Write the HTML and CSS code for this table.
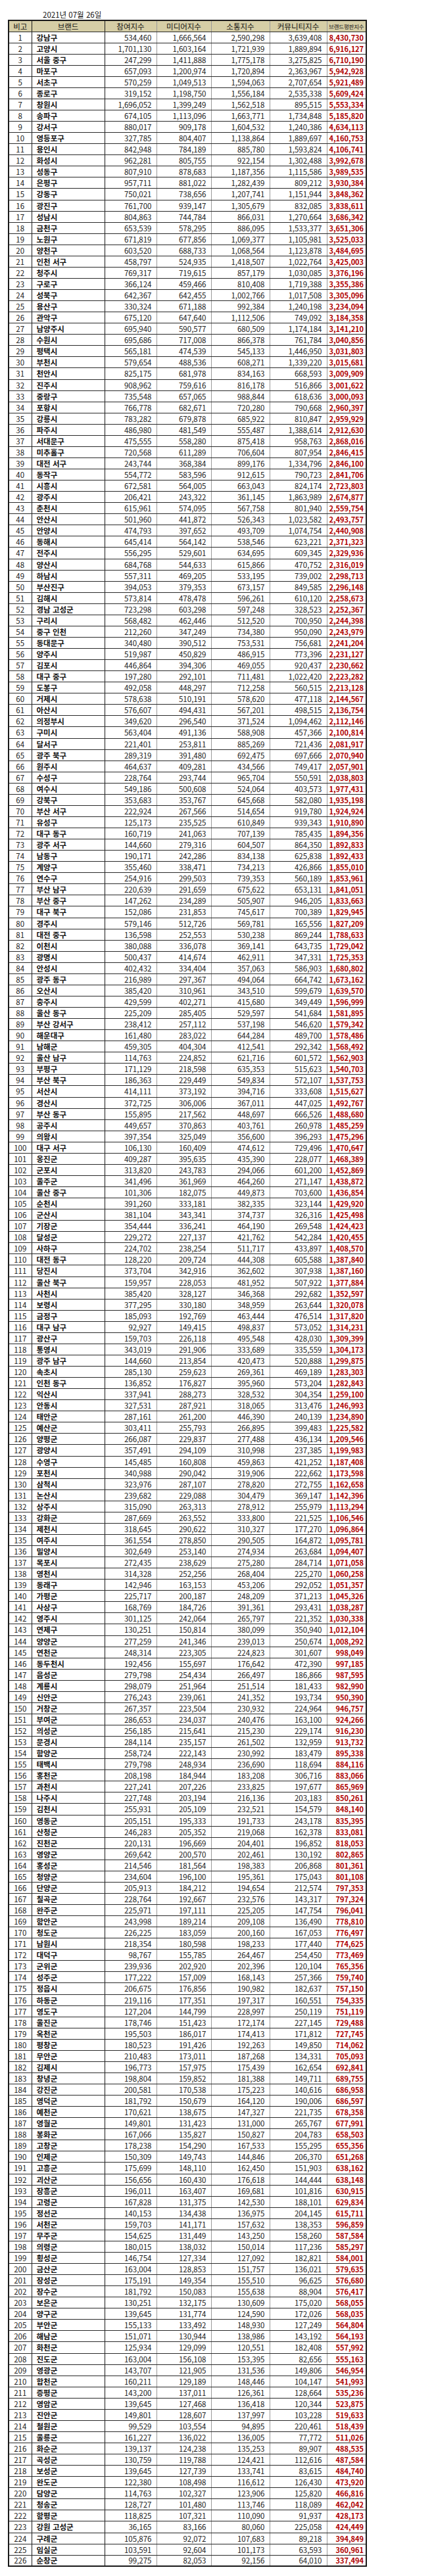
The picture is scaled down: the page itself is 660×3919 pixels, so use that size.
FILE: index.html
```html
<!DOCTYPE html>
<html lang="ko">
<head>
<meta charset="utf-8">
<title>브랜드평판지수</title>
<link rel="stylesheet" href="styles.css">
</head>
<body>
<div class="sheet">
  <div class="date">2021년 07월 26일</div>
  <table class="rank">
    <colgroup>
      <col class="c-no"><col class="c-name"><col class="c-a"><col class="c-b"><col class="c-c"><col class="c-d"><col class="c-t">
    </colgroup>
    <thead>
      <tr>
        <th>비고</th><th>브랜드</th><th>참여지수</th><th>미디어지수</th><th>소통지수</th><th>커뮤니티지수</th><th class="th-t">브랜드평판지수</th>
      </tr>
    </thead>
    <tbody id="rows"></tbody>
  </table>
</div>
<script src="data.js"></script>
</body>
</html>
```
FILE: styles.css
```css
html, body { margin: 0; padding: 0; background: #fff; }
body {
  font-family: "Noto Sans CJK KR", "Noto Sans", sans-serif;
  font-size: 11.5px;
  color: #111;
}
.sheet { padding: 14px 0 0 12px; }
.date {
  margin-left: 53px;
  height: 16px;
  line-height: 16px;
  font-size: 11.5px;
  color: #111;
}
table.rank {
  border-collapse: collapse;
  table-layout: fixed;
  width: 544px;
  border: 2px solid #1a1a1a;
}
.c-no { width: 35px; }
.c-name { width: 111px; }
.c-a { width: 79px; }
.c-b { width: 83px; }
.c-c { width: 89px; }
.c-d { width: 87px; }
.c-t { width: 60px; }
table.rank th,
table.rank td {
  box-sizing: border-box;
  height: 17.07px;
  padding: 0 7px;
  line-height: 14px;
  white-space: nowrap;
  border-top: 1px solid #2a2a2a;
  border-bottom: 1px solid #2a2a2a;
  border-left: 1px solid #9a9a9a;
  border-right: 1px solid #9a9a9a;
  vertical-align: middle;
}
table.rank th {
  background: #d6cea6;
  font-weight: normal;
  text-align: center;
  color: #111;
  padding: 0 2px;
}
table.rank th:nth-child(1), table.rank td:nth-child(1),
table.rank th:nth-child(2), table.rank td:nth-child(2),
table.rank th:nth-child(7), table.rank td:nth-child(7) {
  border-left-color: #1a1a1a;
  border-right-color: #1a1a1a;
}
table.rank th.th-t { font-size: 8.5px; padding: 0; letter-spacing: -0.2px; }
table.rank td.no { text-align: center; padding: 0; color: #222; }
table.rank td.name { text-align: left; font-weight: 600; color: #111; }
table.rank td.num { text-align: right; color: #222; }
table.rank td.tot { text-align: right; color: #b00000; font-weight: bold; padding: 0 3px; font-size: 11px; }
```
FILE: data.js
```js
(function () {
  var raw = [
    "강남구|534460|1666564|2590298|3639408",
    "고양시|1701130|1603164|1721939|1889894",
    "서울 중구|247299|1411888|1775178|3275825",
    "마포구|657093|1200974|1720894|2363967",
    "서초구|570259|1049513|1594063|2707654",
    "종로구|319152|1198750|1556184|2535338",
    "창원시|1696052|1399249|1562518|895515",
    "송파구|674105|1113096|1663771|1734848",
    "강서구|880017|909178|1604532|1240386",
    "영등포구|327785|804407|1138864|1889697",
    "용인시|842948|784189|885780|1593824",
    "화성시|962281|805755|922154|1302488",
    "성동구|807910|878683|1187356|1115586",
    "은평구|957711|881022|1282439|809212",
    "강동구|750021|738656|1207741|1151944",
    "광진구|761700|939147|1305679|832085",
    "성남시|804863|744784|866031|1270664",
    "금천구|653539|578295|886095|1533377",
    "노원구|671819|677856|1069377|1105981",
    "양천구|603520|688733|1068564|1123878",
    "인천 서구|458797|524935|1418507|1022764",
    "청주시|769317|719615|857179|1030085",
    "구로구|366124|459466|810408|1719388",
    "성북구|642367|642455|1002766|1017508",
    "용산구|330324|671188|992384|1240198",
    "관악구|675120|647640|1112506|749092",
    "남양주시|695940|590577|680509|1174184",
    "수원시|695686|717008|866378|761784",
    "평택시|565181|474539|545133|1446950",
    "부천시|579654|488536|608271|1339220",
    "천안시|825175|681978|834163|668593",
    "진주시|908962|759616|816178|516866",
    "중랑구|735548|657065|988844|618636",
    "포항시|766778|682671|720280|790668",
    "강릉시|783282|679878|685922|810847",
    "파주시|486980|481549|555487|1388614",
    "서대문구|475555|558280|875418|958763",
    "미추홀구|720568|611289|706604|807954",
    "대전 서구|243744|368384|899176|1334796",
    "동작구|554772|583596|912615|790723",
    "시흥시|672581|564005|663043|824174",
    "광주시|206421|243322|361145|1863989",
    "춘천시|615961|574095|567758|801940",
    "안산시|501960|441872|526343|1023582",
    "안양시|474793|397652|493709|1074754",
    "동해시|645414|564142|538546|623221",
    "전주시|556295|529601|634695|609345",
    "양산시|684768|544633|615866|470752",
    "하남시|557311|469205|533195|739002",
    "부산진구|394053|379353|673157|849585",
    "김해시|573814|478478|596261|610120",
    "경남 고성군|723298|603298|597248|328523",
    "구리시|568482|462446|512520|700950",
    "중구 인천|212260|347249|734380|950090",
    "동대문구|340480|390512|753531|756681",
    "양주시|519987|450829|486915|773396",
    "김포시|446864|394306|469055|920437",
    "대구 중구|197280|292101|711481|1022420",
    "도봉구|492058|448297|712258|560515",
    "거제시|578638|510191|578620|477118",
    "아산시|576607|494431|567201|498515",
    "의정부시|349620|296540|371524|1094462",
    "구미시|563404|491136|588908|457366",
    "달서구|221401|253811|885269|721436",
    "광주 북구|289319|391480|692475|697666",
    "원주시|464637|409281|434566|749417",
    "수성구|228764|293744|965704|550591",
    "여수시|549186|500608|524064|403573",
    "강북구|353683|353767|645668|582080",
    "부산 서구|222924|267566|514654|919780",
    "유성구|125173|235525|610849|939343",
    "대구 동구|160719|241063|707139|785435",
    "광주 서구|144660|279316|604507|864350",
    "남동구|190171|242286|834138|625838",
    "계양구|355460|338471|734213|426866",
    "연수구|254916|299503|739353|560189",
    "부산 남구|220639|291659|675622|653131",
    "부산 중구|147262|234289|505907|946205",
    "대구 북구|152086|231853|745617|700389",
    "경주시|579146|512726|569781|165556",
    "대전 중구|136598|252553|530238|869244",
    "이천시|380088|336078|369141|643735",
    "광명시|500437|414674|462911|347331",
    "안성시|402432|334404|357063|586903",
    "광주 동구|216989|297367|494064|664742",
    "오산시|385420|310961|343510|599679",
    "충주시|429599|402271|415680|349449",
    "울산 동구|225209|285405|529597|541684",
    "부산 강서구|238412|257112|537198|546620",
    "해운대구|161480|283022|644284|489700",
    "남해군|459305|404304|412541|292342",
    "울산 남구|114763|224852|621716|601572",
    "부평구|171129|218598|635353|515623",
    "부산 북구|186363|229449|549834|572107",
    "서산시|414111|373192|394716|333608",
    "경산시|372725|306006|367011|447025",
    "부산 동구|155895|217562|448697|666526",
    "공주시|449657|370863|403761|260978",
    "의왕시|397354|325049|356600|396293",
    "대구 서구|106130|160409|474612|729496",
    "옹진군|409287|395635|435390|228077",
    "군포시|313820|243783|294066|601200",
    "울주군|341496|361969|464260|271147",
    "울산 중구|101306|182075|449873|703600",
    "순천시|391260|333181|382335|323144",
    "군산시|381104|343341|374737|326316",
    "기장군|354444|336241|464190|269548",
    "달성군|229272|227137|421762|542284",
    "사하구|224702|238254|511717|433897",
    "대전 동구|128220|209724|444308|605588",
    "당진시|373704|342916|362602|307938",
    "울산 북구|159957|228053|481952|507922",
    "사천시|385420|328127|346368|292682",
    "보령시|377295|330180|348959|263644",
    "금정구|185093|192769|463444|476514",
    "대구 남구|92927|149415|498837|573052",
    "광산구|159703|226118|495548|428030",
    "통영시|343019|291906|333689|335559",
    "광주 남구|144660|213854|420473|520888",
    "속초시|285130|259623|269361|469189",
    "인천 동구|136852|176827|395960|573204",
    "익산시|337941|288273|328532|304354",
    "안동시|327531|287921|318065|313476",
    "태안군|287161|261200|446390|240139",
    "예산군|303411|255793|266895|399483",
    "양평군|266087|229837|277488|436134",
    "광양시|357491|294109|310998|237385",
    "수영구|145485|160808|459863|421252",
    "포천시|340988|290042|319906|222662",
    "삼척시|323976|287107|278820|272755",
    "논산시|239682|229088|304479|369147",
    "상주시|315090|263313|278912|255979",
    "강화군|287669|263552|333800|221525",
    "제천시|318645|290622|310327|177270",
    "여주시|361554|278850|290505|164872",
    "밀양시|302649|253140|274934|263684",
    "목포시|272435|238629|275280|284714",
    "영천시|314328|252256|268404|225270",
    "동래구|142946|163153|453206|292052",
    "가평군|225717|200187|248209|371213",
    "사상구|168769|184726|391361|293431",
    "영주시|301125|242064|265797|221352",
    "연제구|130251|150814|380099|350940",
    "양양군|277259|241346|239013|250674",
    "연천군|248314|223305|224823|301607",
    "동두천시|192456|155697|176642|472390",
    "음성군|279798|254434|266497|186866",
    "계룡시|298079|251964|251514|181433",
    "신안군|276243|239061|241352|193734",
    "거창군|267357|223504|230932|224964",
    "부여군|286653|234037|240476|163100",
    "의성군|256185|215641|215230|229174",
    "문경시|284114|235157|261502|132959",
    "함양군|258724|222143|230992|183479",
    "태백시|279798|248934|236690|118694",
    "홍천군|208198|184944|183208|306716",
    "과천시|227241|207226|233825|197677",
    "나주시|227748|203194|216136|203183",
    "김천시|255931|205109|232521|154579",
    "영동군|205151|195333|191733|243178",
    "산청군|246283|205352|219068|162378",
    "진천군|220131|196669|204401|196852",
    "영양군|269642|200570|202461|130192",
    "홍성군|214546|181564|198383|206868",
    "청양군|234604|196100|195361|175043",
    "단양군|205913|184212|194654|212574",
    "칠곡군|228764|192667|232576|143317",
    "완주군|225971|197111|225205|147754",
    "함안군|243998|189214|209108|136490",
    "청도군|226225|183059|200160|167053",
    "남원시|218354|180598|198233|177440",
    "대덕구|98767|155785|264467|254450",
    "군위군|239936|202920|202396|120104",
    "성주군|177222|157009|168143|257366",
    "정읍시|206675|176856|190982|182637",
    "하동군|219116|177351|197317|160551",
    "영도구|127204|144799|228997|250119",
    "울진군|178746|151423|172174|227145",
    "옥천군|195503|186017|174413|171812",
    "평창군|180523|191426|192263|149850",
    "무안군|210483|173011|187268|134331",
    "김제시|196773|157975|175439|162654",
    "창녕군|198804|159852|181388|149711",
    "강진군|200581|170538|175223|140616",
    "영덕군|181792|150679|164120|190006",
    "예천군|170621|138675|147327|221735",
    "영월군|149801|131423|131000|265767",
    "봉화군|167066|135827|150827|204783",
    "고창군|178238|154290|167533|155295",
    "인제군|150309|149743|144846|206370",
    "고흥군|175699|148110|162450|151903",
    "괴산군|156656|160430|176618|144444",
    "장흥군|196011|163407|169681|101816",
    "고령군|167828|131375|142530|188101",
    "정선군|140153|134438|136975|204145",
    "서천군|159703|141171|157632|138353",
    "무주군|154625|131449|143250|158260",
    "의령군|180015|138032|150014|117236",
    "횡성군|146754|127334|127092|182821",
    "금산군|163004|128853|151757|136021",
    "장성군|175191|149354|155510|96625",
    "장수군|181792|150083|155638|88904",
    "보은군|130251|132175|130609|175020",
    "양구군|139645|131774|124590|172026",
    "부안군|155133|133492|148930|127249",
    "해남군|151071|130944|138986|143192",
    "화천군|125934|129099|120551|182408",
    "진도군|163004|156108|153395|82656",
    "영광군|143707|121905|131536|149806",
    "합천군|160211|129189|148446|104147",
    "증평군|143200|137011|126361|128664",
    "영암군|139645|127468|136418|120344",
    "진안군|149801|128607|137997|103228",
    "철원군|99529|103554|94895|220461",
    "울릉군|161227|136022|136005|77772",
    "화순군|139137|124238|135253|89907",
    "곡성군|130759|119788|124421|112616",
    "보성군|139645|127739|133741|83615",
    "완도군|122380|108498|116612|126430",
    "담양군|114763|102327|123906|125820",
    "청송군|128727|101480|113746|118089",
    "함평군|118825|107321|110090|91937",
    "강원 고성군|36165|83166|80060|225058",
    "구례군|105876|92072|107683|89218",
    "임실군|103591|92604|101173|63593",
    "순창군|99275|82053|92156|64010"
  ];
  function fmt(n) {
    return String(n).replace(/\B(?=(\d{3})+(?!\d))/g, ",");
  }
  function cell(tr, cls, text) {
    var td = document.createElement("td");
    td.className = cls;
    td.textContent = text;
    tr.appendChild(td);
  }
  var body = document.getElementById("rows");
  raw.forEach(function (line, i) {
    var p = line.split("|");
    var a = +p[1], b = +p[2], c = +p[3], d = +p[4];
    var tr = document.createElement("tr");
    cell(tr, "no", String(i + 1));
    cell(tr, "name", p[0]);
    cell(tr, "num", fmt(a));
    cell(tr, "num", fmt(b));
    cell(tr, "num", fmt(c));
    cell(tr, "num", fmt(d));
    cell(tr, "tot", fmt(a + b + c + d));
    body.appendChild(tr);
  });
})();
```
